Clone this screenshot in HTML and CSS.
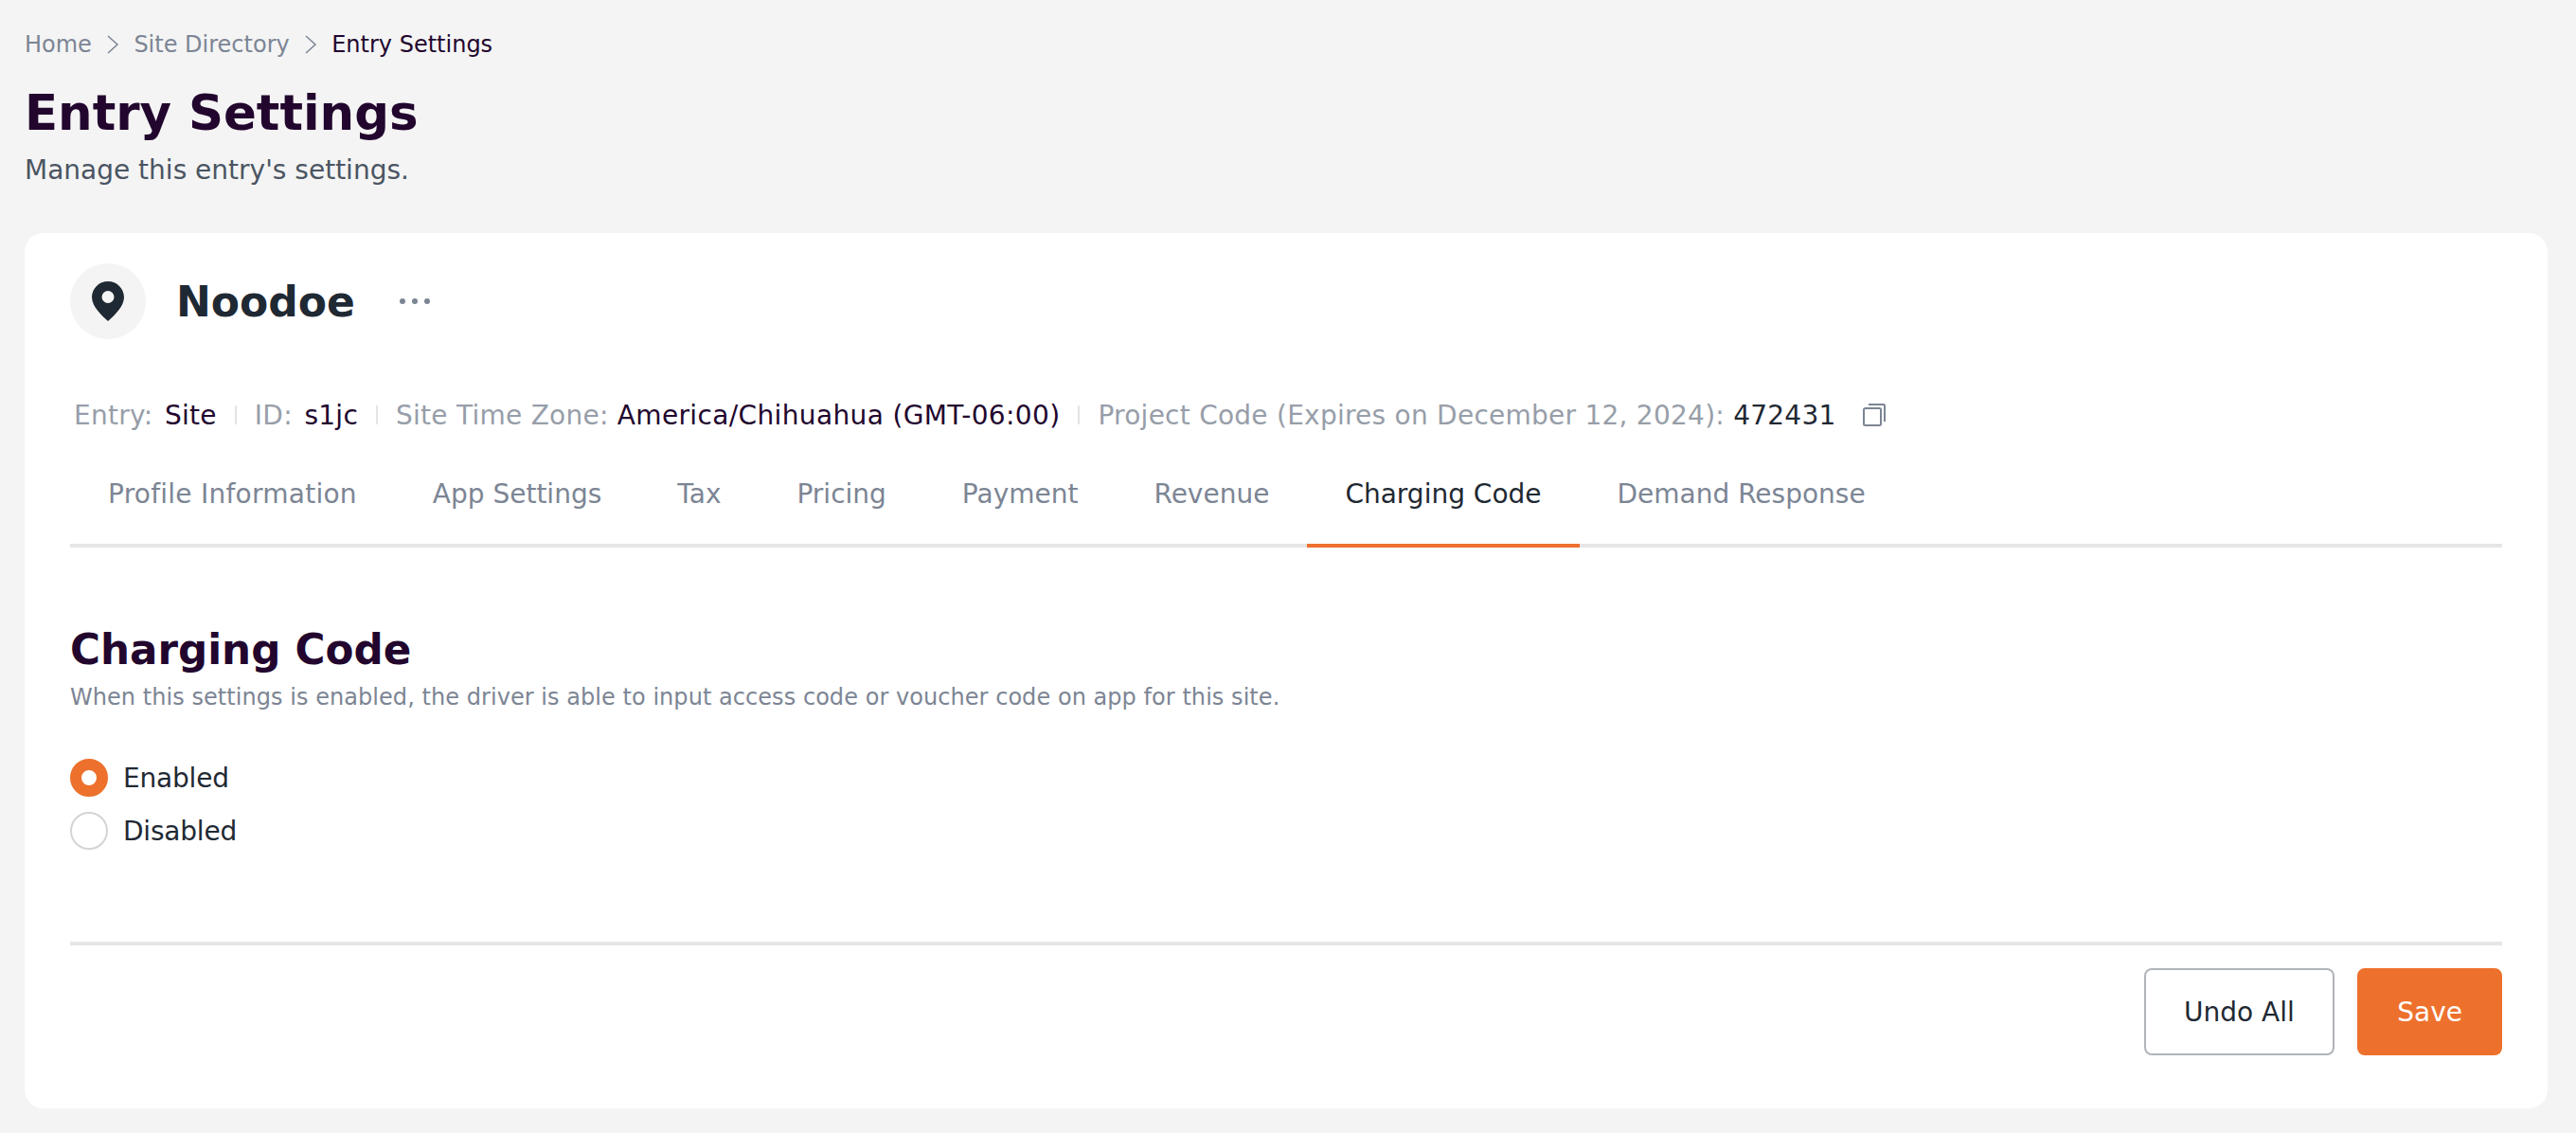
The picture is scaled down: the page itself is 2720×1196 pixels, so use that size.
FILE: index.html
```html
<!DOCTYPE html>
<html lang="en">
<head>
  <meta charset="UTF-8">
  <title>Entry Settings</title>
  <link rel="stylesheet" href="styles.css">
</head>
<body>
  <nav class="breadcrumb">
    <span>Home</span>
    <svg class="crumb-sep" viewBox="0 0 14 24"><path d="M2 3l10 9-10 9"/></svg>
    <span>Site Directory</span>
    <svg class="crumb-sep" viewBox="0 0 14 24"><path d="M2 3l10 9-10 9"/></svg>
    <span class="current">Entry Settings</span>
  </nav>
  <h1 class="page-title">Entry Settings</h1>
  <p class="page-sub">Manage this entry's settings.</p>

  <main class="card">
    <div class="entry-head">
      <div class="entry-icon">
        <svg viewBox="0 0 34 42"><path fill-rule="evenodd" d="M17 0C7.600 0 0 7.500 0 16.800 0 27 11 36.500 17 42c6-5.500 17-15 17-25.200C34 7.500 26.400 0 17 0zm0 10a6.500 6.500 0 1 1 0 13 6.500 6.500 0 0 1 0-13z"/></svg>
      </div>
      <h2 class="entry-name">Noodoe</h2>
      <div class="more"><i></i><i></i><i></i></div>
    </div>

    <div class="meta">
      <span>Entry: <b class="short">Site</b></span>
      <span class="meta-sep"></span>
      <span>ID: <b class="short">s1jc</b></span>
      <span class="meta-sep"></span>
      <span>Site Time Zone: <b class="zone">America/Chihuahua (GMT-06:00)</b></span>
      <span class="meta-sep"></span>
      <span>Project Code (Expires on December 12, 2024): <b class="code">472431</b></span>
      <svg class="copy" viewBox="0 0 24 24"><rect x="1" y="5" width="18" height="18" rx="1.500"/><path d="M6 1h16a1 1 0 0 1 1 1v17"/></svg>
    </div>

    <div class="tabs">
      <a class="wide">Profile Information</a>
      <a>App Settings</a>
      <a>Tax</a>
      <a>Pricing</a>
      <a>Payment</a>
      <a>Revenue</a>
      <a class="active">Charging Code</a>
      <a>Demand Response</a>
    </div>

    <section class="section">
      <h3>Charging Code</h3>
      <p>When this settings is enabled, the driver is able to input access code or voucher code on app for this site.</p>
      <div class="radio-row"><span class="radio on"></span>Enabled</div>
      <div class="radio-row"><span class="radio"></span>Disabled</div>
    </section>

    <div class="actions">
      <button class="btn">Undo All</button>
      <button class="btn primary">Save</button>
    </div>
  </main>
</body>
</html>
```

FILE: styles.css
```css
* {
  margin: 0;
  padding: 0;
  box-sizing: border-box;
}
body {
  background-color: #f4f4f4;
  font-family: "DejaVu Sans", Verdana, sans-serif;
  font-variant-ligatures: none;
  height: 1196px;
  padding: 31px 30px 26px 26px;
  overflow: hidden;
}
.breadcrumb {
  display: flex;
  align-items: center;
  height: 32px;
  font-size: 24px;
  color: #7c8594;
}
.crumb-sep {
  width: 14px;
  height: 24px;
  margin: 0 15.25px;
  fill: none;
  stroke: #7c8594;
  stroke-width: 1.5;
}
.current {
  color: #22062e;
}
.page-title {
  margin-top: 24px;
  font-size: 51.4px;
  line-height: 64px;
  color: #22062e;
}
.page-sub {
  margin-top: 11px;
  font-size: 28px;
  line-height: 36px;
  color: #4b5563;
}
.card {
  margin-top: 48px;
  height: 924px;
  padding: 32px 48px 0;
  background-color: #fff;
  border-radius: 20px;
}
.entry-head {
  display: flex;
  align-items: center;
  height: 80px;
}
.entry-icon {
  display: flex;
  align-items: center;
  justify-content: center;
  width: 80px;
  height: 80px;
  border-radius: 50%;
  background-color: #f4f4f4;
}
.entry-icon svg {
  width: 34px;
  height: 42px;
  fill: #1f2933;
}
.entry-name {
  margin-left: 32px;
  font-size: 44px;
  color: #1f2933;
}
.more {
  display: flex;
  gap: 7px;
  margin-left: 47px;
}
.more i {
  width: 6px;
  height: 6px;
  border-radius: 50%;
  background-color: #7c8594;
}
.meta {
  display: flex;
  align-items: center;
  height: 40px;
  margin-top: 60px;
  padding-left: 4px;
  font-size: 28px;
  letter-spacing: 0.25px;
  color: #979ea9;
}
.meta b {
  font-weight: normal;
  color: #22062e;
}
.meta b.short {
  margin-left: 3.5px;
}
.meta b.zone {
  letter-spacing: 0.36px;
}
.meta b.code {
  color: #1f2933;
}
.meta-sep {
  width: 2px;
  height: 20px;
  margin: 0 19px;
  background-color: #e4e4e4;
}
.copy {
  width: 24px;
  height: 24px;
  margin-left: 28px;
  fill: none;
  stroke: #7c8594;
  stroke-width: 2;
}
.tabs {
  display: flex;
  margin-top: 36px;
  border-bottom: 4px solid #e6e6e6;
}
.tabs a {
  height: 72px;
  margin-bottom: -4px;
  padding: 8px 40px 0;
  font-size: 28px;
  line-height: 40px;
  color: #7c8594;
  border-bottom: 4px solid transparent;
  box-sizing: content-box;
}
.tabs a.wide {
  letter-spacing: 0.25px;
}
.tabs a.active {
  color: #1f2933;
  border-bottom-color: #ed712d;
}
.section {
  height: 420px;
  padding-top: 80px;
  border-bottom: 4px solid #e6e6e6;
}
.section h3 {
  font-size: 43.6px;
  line-height: 56px;
  color: #22062e;
}
.section p {
  margin-top: 4px;
  margin-bottom: 47px;
  font-size: 24px;
  line-height: 36px;
  letter-spacing: 0.05px;
  color: #7c8594;
}
.radio-row {
  display: flex;
  align-items: center;
  gap: 16px;
  height: 40px;
  margin-bottom: 16px;
  font-size: 28px;
  letter-spacing: -0.2px;
  color: #1f2933;
}
.radio {
  width: 40px;
  height: 40px;
  border: 2px solid #d4d4d4;
  border-radius: 50%;
}
.radio.on {
  border: 12px solid #ed712d;
}
.actions {
  display: flex;
  justify-content: flex-end;
  gap: 24px;
  margin-top: 24px;
}
.btn {
  height: 92px;
  padding: 0 40.5px;
  font-family: inherit;
  font-size: 28px;
  color: #1f2933;
  background-color: #fff;
  border: 2px solid #b1b5ba;
  border-radius: 8px;
}
.btn.primary {
  padding: 0 40px;
  color: #fff;
  background-color: #ed712d;
  border-color: #ed712d;
}
```
